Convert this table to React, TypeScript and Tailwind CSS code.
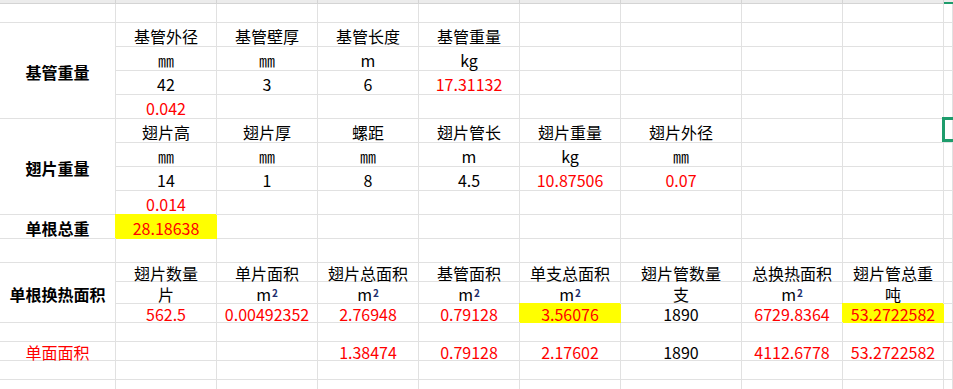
import type { ReactNode } from 'react';

type Cell = {
  t?: ReactNode;
  red?: boolean;
  bold?: boolean;
  yellow?: boolean;
  span?: 3 | 4;
  sel?: boolean;
};

const M2 = (
  <span>
    m<span className="relative -top-[4px] ml-[1px] text-[10px] font-bold text-[#1f2f6f]">2</span>
  </span>
);

const e = (n: number): Cell[] => Array.from({ length: n }, () => ({}));
const r = (t: string): Cell => ({ t, red: true });

const rows: Cell[][] = [
  e(10),
  [{ t: '基管重量', bold: true, span: 4 }, { t: '基管外径' }, { t: '基管壁厚' }, { t: '基管长度' }, { t: '基管重量' }, ...e(5)],
  [{ t: '㎜' }, { t: '㎜' }, { t: 'm' }, { t: 'kg' }, ...e(5)],
  [{ t: '42' }, { t: '3' }, { t: '6' }, r('17.31132'), ...e(5)],
  [r('0.042'), ...e(8)],
  [
    { t: '翅片重量', bold: true, span: 4 },
    { t: '翅片高' },
    { t: '翅片厚' },
    { t: '螺距' },
    { t: '翅片管长' },
    { t: '翅片重量' },
    { t: '翅片外径' },
    {},
    {},
    { sel: true },
  ],
  [{ t: '㎜' }, { t: '㎜' }, { t: '㎜' }, { t: 'm' }, { t: 'kg' }, { t: '㎜' }, ...e(3)],
  [{ t: '14' }, { t: '1' }, { t: '8' }, { t: '4.5' }, r('10.87506'), r('0.07'), ...e(3)],
  [r('0.014'), ...e(8)],
  [{ t: '单根总重', bold: true }, { t: '28.18638', red: true, yellow: true }, ...e(8)],
  e(10),
  [
    { t: '单根换热面积', bold: true, span: 3 },
    { t: '翅片数量' },
    { t: '单片面积' },
    { t: '翅片总面积' },
    { t: '基管面积' },
    { t: '单支总面积' },
    { t: '翅片管数量' },
    { t: '总换热面积' },
    { t: '翅片管总重' },
    {},
  ],
  [{ t: '片' }, { t: M2 }, { t: M2 }, { t: M2 }, { t: M2 }, { t: '支' }, { t: M2 }, { t: '吨' }, {}],
  [
    r('562.5'),
    r('0.00492352'),
    r('2.76948'),
    r('0.79128'),
    { t: '3.56076', red: true, yellow: true },
    { t: '1890' },
    r('6729.8364'),
    { t: '53.2722582', red: true, yellow: true },
    {},
  ],
  e(10),
  [r('单面面积'), {}, {}, r('1.38474'), r('0.79128'), r('2.17602'), { t: '1890' }, r('4112.6778'), r('53.2722582'), {}],
  e(10),
  e(10),
];

const spanClass = { 3: 'row-span-3', 4: 'row-span-4' };

function GridCell({ c }: { c: Cell }) {
  return (
    <div
      className={[
        'relative flex items-center justify-center whitespace-nowrap border-r border-b leading-none',
        c.yellow ? 'bg-[#ffff00] border-[#ffff00] shadow-[-1px_-1px_0_0_#ffff00]' : 'border-[#e1e1e1]',
        c.red ? 'text-[#ff0000]' : 'text-black',
        c.bold ? 'font-bold' : '',
        c.span ? spanClass[c.span] : '',
      ].join(' ')}
    >
      <span className="pt-[2px]">{c.t}</span>
      {c.sel && (
        <div className="absolute -left-[2px] -top-[2px] z-10 h-[25px] w-[30px] border-[3px] border-[#1e9c6c]" />
      )}
    </div>
  );
}

export default function App() {
  return (
    <div className="relative h-[389px] w-[953px] overflow-hidden bg-white font-['Noto_Sans_CJK_SC','Noto_Sans',sans-serif] text-[16px]">
      {/* column header edge */}
      <div className="grid h-[4px] grid-cols-[116px_101px_101px_101px_101px_101px_121px_101px_101px_1fr]">
        {Array.from({ length: 9 }).map((_, i) => (
          <div key={i} className="border-r border-b border-[#d4d4d4] bg-[#ececec]" />
        ))}
        <div className="border-b-2 border-[#1e9c6c] bg-[#ececec]" />
      </div>
      <div className="grid grid-cols-[116px_101px_101px_101px_101px_101px_121px_101px_101px_1fr] grid-rows-[19px_24px_24px_24px_24px_24px_24px_24px_24px_24px_24px_19px_22px_19px_19px_19px_19px_19px]">
        {rows.flatMap((row, ri) => row.map((c, ci) => <GridCell key={`${ri}-${ci}`} c={c} />))}
      </div>
    </div>
  );
}
